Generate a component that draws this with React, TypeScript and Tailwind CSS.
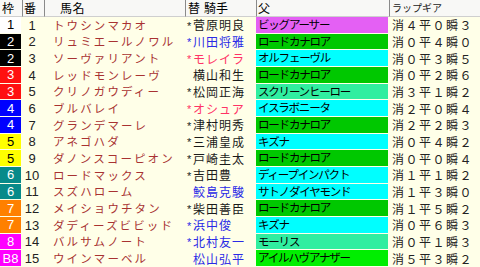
const FRAME: Record<string, { bg: string; fg: string }> = {
  '1': { bg: 'bg-white', fg: 'text-black' },
  '2': { bg: 'bg-black', fg: 'text-white' },
  '3': { bg: 'bg-[#ff1010]', fg: 'text-white' },
  '4': { bg: 'bg-[#0000ff]', fg: 'text-white' },
  '5': { bg: 'bg-[#ffff00]', fg: 'text-black' },
  '6': { bg: 'bg-[#078a8a]', fg: 'text-white' },
  '7': { bg: 'bg-[#ff8000]', fg: 'text-white' },
  '8': { bg: 'bg-[#ff00ff]', fg: 'text-white' },
};

const SIRE: Record<string, string> = {
  pink: 'bg-[#e460f4]',
  green: 'bg-[#00c800]',
  cyan: 'bg-[#00ffff]',
  mint: 'bg-[#30eea0]',
  lime: 'bg-[#00ee00]',
};

const JOCKEY: Record<string, string> = {
  k: 'text-[#1a1a1a]',
  b: 'text-[#2a2ae6]',
  r: 'text-[#ff3366]',
};

// 枠, 番, 馬名, 替, 騎手, 色, 父, 父色, ラップギア
const rows = [
  ['1', '1', 'トウシンマカオ', true, '菅原明良', 'k', 'ビッグアーサー', 'pink', '消４平０瞬３'],
  ['2', '2', 'リュミエールノワル', true, '川田将雅', 'b', 'ロードカナロア', 'green', '消０平４瞬０'],
  ['2', '3', 'ソーヴァリアント', true, 'モレイラ', 'r', 'オルフェーヴル', 'cyan', '消０平３瞬５'],
  ['3', '4', 'レッドモンレーヴ', false, '横山和生', 'k', 'ロードカナロア', 'green', '消０平２瞬６'],
  ['3', '5', 'クリノガウディー', true, '松岡正海', 'k', 'スクリーンヒーロー', 'mint', '消３平１瞬２'],
  ['4', '6', 'ブルバレイ', true, 'オシュア', 'r', 'イスラボニータ', 'cyan', '消２平０瞬４'],
  ['4', '7', 'グランデマーレ', true, '津村明秀', 'k', 'ロードカナロア', 'green', '消２平２瞬３'],
  ['5', '8', 'アネゴハダ', true, '三浦皇成', 'k', 'キズナ', 'cyan', '消０平４瞬２'],
  ['5', '9', 'ダノンスコーピオン', true, '戸崎圭太', 'k', 'ロードカナロア', 'green', '消０平０瞬４'],
  ['6', '10', 'ロードマックス', true, '吉田豊', 'k', 'ディープインパクト', 'cyan', '消１平１瞬２'],
  ['6', '11', 'スズハローム', false, '鮫島克駿', 'b', 'サトノダイヤモンド', 'cyan', '消１平３瞬０'],
  ['7', '12', 'メイショウチタン', true, '柴田善臣', 'k', 'ロードカナロア', 'green', '消１平５瞬２'],
  ['7', '13', 'ダディーズビビッド', true, '浜中俊', 'b', 'キズナ', 'cyan', '消０平６瞬３'],
  ['8', '14', 'バルサムノート', true, '北村友一', 'b', 'モーリス', 'mint', '消０平１瞬３'],
  ['B8', '15', 'ウインマーベル', false, '松山弘平', 'b', 'アイルハヴアナザー', 'lime', '消５平３瞬２'],
] as const;

const jp = { fontFamily: '"Noto Sans CJK JP", "Noto Sans", sans-serif' };
const num = { fontFamily: '"Liberation Sans", Arial, sans-serif' };

export default function App() {
  return (
    <div
      className="w-[480px] h-[267px] overflow-hidden bg-[#ffffe8] grid grid-cols-[22px_22px_141px_71px_133px_91px] grid-rows-[17px_repeat(15,1fr)] leading-none"
      style={jp}
    >
      {/* header */}
      <div className="bg-[#f8f8f6] border-b border-[#cfcfcf] text-[12px] text-black flex items-center pl-[2px]">枠</div>
      <div className="bg-[#f8f8f6] border-b border-l border-[#cfcfcf] border-l-[#8a8a8a] text-[12px] text-black flex items-center pl-[1px]">番</div>
      <div className="bg-[#f8f8f6] border-b border-l border-[#cfcfcf] border-l-[#8a8a8a] text-[12px] text-black flex items-center pl-[15px] tracking-[0.5px]">馬名</div>
      <div className="bg-[#f8f8f6] border-b border-l border-[#cfcfcf] border-l-[#8a8a8a] text-[12px] text-black flex items-center pl-[2px]">
        替<span className="ml-[4px]">騎手</span>
      </div>
      <div className="bg-[#f8f8f6] border-b border-l border-[#cfcfcf] border-l-[#8a8a8a] text-[12px] text-black flex items-center pl-[1px]">父</div>
      <div className="bg-[#f8f8f6] border-b border-l border-[#cfcfcf] border-l-[#8a8a8a] text-[10px] text-[#222] flex items-center pl-[2px]">ラップギア</div>

      {rows.map(([frame, no, horse, change, jockey, jc, sire, sc, lap]) => {
        const f = FRAME[frame === 'B8' ? '8' : frame];
        return [
          <div key={no + 'f'} className="pr-px pb-px">
            <div className={`h-full flex items-center justify-center text-[13px] ${f.bg} ${f.fg}`} style={num}>
              {frame}
            </div>
          </div>,
          <div key={no + 'n'} className="flex items-center justify-center pr-[2px] text-[13px] text-[#222]" style={num}>
            {no}
          </div>,
          <div key={no + 'h'} className="flex items-center pl-[9px] text-[11.5px] tracking-[2.1px] text-[#a83232] whitespace-nowrap">
            {horse}
          </div>,
          <div key={no + 'j'} className={`flex items-center pl-[2px] text-[12px] tracking-[1px] whitespace-nowrap ${JOCKEY[jc]}`}>
            <span className="w-[6px] text-[11px] tracking-normal translate-y-[1px]" style={num}>
              {change ? '*' : ''}
            </span>
            {jockey}
          </div>,
          <div key={no + 's'} className="pr-px pb-px">
            <div className={`h-full flex items-center pl-[2px] text-[11.5px] tracking-[-1.2px] text-black whitespace-nowrap overflow-hidden ${SIRE[sc]}`}>
              {sire}
            </div>
          </div>,
          <div key={no + 'l'} className="flex items-center pl-[3px] text-[12px] tracking-[1.5px] text-[#222] whitespace-nowrap">
            {lap}
          </div>,
        ];
      })}
    </div>
  );
}
